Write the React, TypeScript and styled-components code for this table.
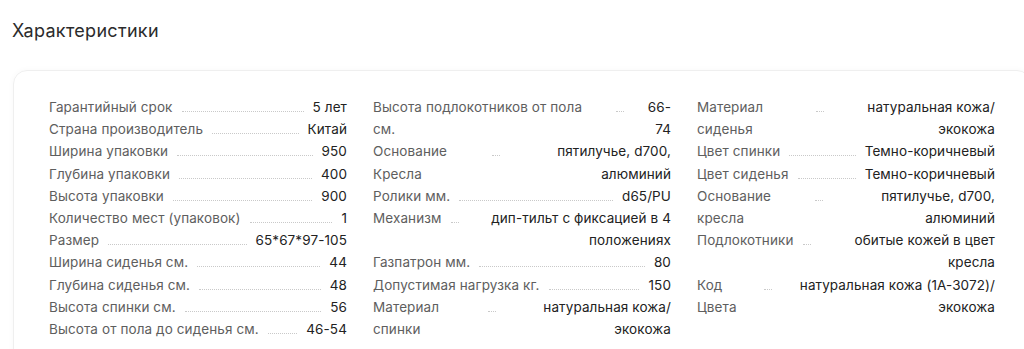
import React from "react";
import styled, { createGlobalStyle } from "styled-components";

const Global = createGlobalStyle`
  html, body { margin: 0; padding: 0; background: #ffffff; overflow: hidden; }
  body { font-family: Inter, "Noto Sans", sans-serif; color: #222; }
`;

const Page = styled.div`
  width: 1031px;
  padding: 19px 0 0 0;
`;

const Title = styled.h2`
  margin: 0 0 0 12px;
  font-size: 18px;
  line-height: 24px;
  letter-spacing: 0.3px;
  font-weight: 400;
  color: #2b2b2b;
`;

const Card = styled.section`
  margin: 27px 0 0 13px;
  border: 1px solid #efefef;
  border-radius: 14px;
  padding: 25px 35px 24px 35px;
  box-shadow: 0 0 6px rgba(0, 0, 0, 0.03);
`;

const Columns = styled.div`
  display: grid;
  grid-template-columns: repeat(3, 298px);
  column-gap: 26px;
  align-items: start;
`;

const List = styled.dl`
  margin: 0;
  display: flex;
  flex-direction: column;
`;

const Row = styled.div`
  display: flex;
  align-items: baseline;
  font-size: 13.5px;
  line-height: 22.2px;
  letter-spacing: 0.1px;
`;

const Label = styled.dt`
  margin: 0;
  color: #5e5e5e;
  flex: 0 1 auto;
`;

const Leader = styled.span`
  flex: 1 0 8px;
  margin: 0 9px;
  border-bottom: 1px dotted #c9c9c9;
`;

const Value = styled.dd`
  margin: 0;
  color: #222;
  text-align: right;
  flex: 0 1 auto;
`;

type Spec = [string, string];

const col1: Spec[] = [
  ["Гарантийный срок", "5 лет"],
  ["Страна производитель", "Китай"],
  ["Ширина упаковки", "950"],
  ["Глубина упаковки", "400"],
  ["Высота упаковки", "900"],
  ["Количество мест (упаковок)", "1"],
  ["Размер", "65*67*97-105"],
  ["Ширина сиденья см.", "44"],
  ["Глубина сиденья см.", "48"],
  ["Высота спинки см.", "56"],
  ["Высота от пола до сиденья см.", "46-54"],
];

const col2: Spec[] = [
  ["Высота подлокотников от пола см.", "66-74"],
  ["Основание Кресла", "пятилучье, d700, алюминий"],
  ["Ролики мм.", "d65/PU"],
  ["Механизм", "дип-тильт с фиксацией в 4 положениях"],
  ["Газпатрон мм.", "80"],
  ["Допустимая нагрузка кг.", "150"],
  ["Материал спинки", "натуральная кожа/экокожа"],
];

const col3: Spec[] = [
  ["Материал сиденья", "натуральная кожа/экокожа"],
  ["Цвет спинки", "Темно-коричневый"],
  ["Цвет сиденья", "Темно-коричневый"],
  ["Основание кресла", "пятилучье, d700, алюминий"],
  ["Подлокотники", "обитые кожей в цвет кресла"],
  ["Код Цвета", "натуральная кожа (1А-3072)/экокожа"],
];

const SpecList = ({ items }: { items: Spec[] }) => (
  <List>
    {items.map(([k, v]) => (
      <Row key={k}>
        <Label>{k}</Label>
        <Leader />
        <Value>{v}</Value>
      </Row>
    ))}
  </List>
);

export default function App() {
  return (
    <Page>
      <Global />
      <Title>Характеристики</Title>
      <Card>
        <Columns>
          <SpecList items={col1} />
          <SpecList items={col2} />
          <SpecList items={col3} />
        </Columns>
      </Card>
    </Page>
  );
}
